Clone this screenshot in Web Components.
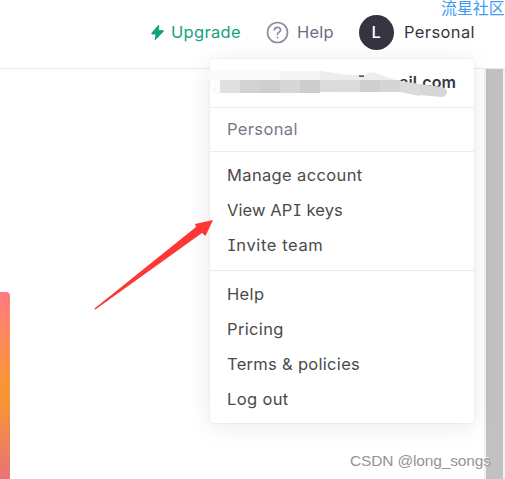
<!DOCTYPE html>
<html lang="en">
<head>
<meta charset="utf-8">
<title>Account menu</title>
<style>
    html, body{
        margin: 0;
        height: 100%;
        overflow: hidden;
        background: #fff;
        font-family: Inter, "Liberation Sans", sans-serif;
    }
</style>
</head>
<body>
<account-page></account-page>
<script>
function attach(el, html){
    var template = document.createElement('template')
    template.innerHTML = html
    el.attachShadow({mode: 'open'}).appendChild(template.content.cloneNode(true))
}

class NavItem extends HTMLElement {
    constructor(){
        super();
        attach(this, `
            <style>
                :host{
                    display: flex;
                    align-items: center;
                    gap: var(--gap, 8px);
                    font-size: 16.5px;
                    line-height: 24px;
                    white-space: nowrap;
                }
                .icon{ display: flex; }
            </style>
            <span class="icon"><slot name="icon"></slot></span>
            <span class="label"><slot></slot></span>
        `)
    }
}
customElements.define('nav-item', NavItem)

class UserAvatar extends HTMLElement {
    constructor(){
        super();
        attach(this, `
            <style>
                :host{
                    display: flex;
                    align-items: center;
                    justify-content: center;
                    width: 35px;
                    height: 35px;
                    border-radius: 50%;
                    background: #343541;
                    color: #fff;
                    font-size: 16.5px;
                    font-weight: 500;
                }
            </style>
            <slot></slot>
        `)
    }
}
customElements.define('user-avatar', UserAvatar)

class TopBar extends HTMLElement {
    constructor(){
        super();
        attach(this, `
            <style>
                :host{
                    display: flex;
                    box-sizing: border-box;
                    height: 69px;
                    padding: 14px 30px 0 151px;
                    border-bottom: 1px solid #e9e9ee;
                }
                nav-item{ height: 36px; }
                svg{ display: block; }
                .upgrade{ width: 115px; color: #10a37f; --gap: 7px; letter-spacing: 0.3px; }
                .help{ width: 93px; color: #6e6e80; --gap: 8px; letter-spacing: 0.2px; }
                .user{ color: #353740; --gap: 10px; letter-spacing: 0.4px; }
            </style>
            <nav-item class="upgrade">
                <svg slot="icon" width="13" height="17" viewBox="0 0 13 17"><path d="M7.8 1 .8 9.100q-.4.9.5.9H5l-.8 5.800 8-8.300q.5-.9-.5-.9H7.500z" fill="#10a37f" stroke="#10a37f" stroke-width=".9" stroke-linejoin="round"/></svg>Upgrade</nav-item>
            <nav-item class="help">
                <svg slot="icon" width="23" height="23" viewBox="0 0 23 23" fill="none" stroke="#8e8ea0" stroke-width="1.7" stroke-linecap="round"><circle cx="11.5" cy="11.5" r="10"/><path d="M8.4 8.8C8.7 5.7 14.6 5.4 14.6 9c0 2.3-3.1 2.3-3.1 4.3"/><path d="M11.5 16.5v.1" stroke-width="2"/></svg>Help</nav-item>
            <nav-item class="user">
                <user-avatar slot="icon">L</user-avatar>Personal</nav-item>
        `)
    }
}
customElements.define('top-bar', TopBar)

class MenuItem extends HTMLElement {
    constructor(){
        super();
        attach(this, `
            <style>
                :host{
                    display: block;
                    height: 35px;
                    line-height: 35px;
                    color: #4a4a4a;
                    font-size: 16.5px;
                    letter-spacing: 0.36px;
                    white-space: nowrap;
                }
            </style>
            <slot></slot>
        `)
    }
}
customElements.define('menu-item', MenuItem)

class MenuGroup extends HTMLElement {
    constructor(){
        super();
        attach(this, `
            <style>
                :host{
                    display: block;
                    box-sizing: border-box;
                    padding: 6px 17px;
                    border-bottom: 1px solid #ececec;
                }
                :host(:last-of-type){ border-bottom: none; }
            </style>
            <slot></slot>
        `)
    }
}
customElements.define('menu-group', MenuGroup)

class AccountMenu extends HTMLElement {
    constructor(){
        super();
        attach(this, `
            <style>
                :host{
                    display: block;
                    box-sizing: border-box;
                    width: 264px;
                    height: 364px;
                    border-radius: 4px;
                    background: #fff;
                    box-shadow: 0 0 2px rgba(0,0,0,.12), 0 3px 26px rgba(0,0,0,.085);
                }
                .email{ height: 49px; padding: 6px 18px; text-align: right; }
                .email menu-item{ font-weight: 600; color: #353740; font-size: 16px; letter-spacing: 0.1px; }
                .team{ height: 44px; padding-top: 4px; }
                .team menu-item{ color: #777786; }
                .account{ height: 119px; }
                /* capital I with serifs */
                i{
                    font: 15.5px/1 "DejaVu Sans Mono", monospace;
                    letter-spacing: 0;
                }
            </style>
            <menu-group class="email"><menu-item>ail.com</menu-item></menu-group>
            <menu-group class="team"><menu-item>Personal</menu-item></menu-group>
            <menu-group class="account">
                <menu-item>Manage account</menu-item>
                <menu-item style="letter-spacing: 0.1px">View AP<i>I</i> keys</menu-item>
                <menu-item style="letter-spacing: 0.6px"><i>I</i>nvite team</menu-item>
            </menu-group>
            <menu-group>
                <menu-item>Help</menu-item>
                <menu-item>Pricing</menu-item>
                <menu-item style="letter-spacing: 0.3px">Terms &amp; policies</menu-item>
                <menu-item>Log out</menu-item>
            </menu-group>
        `)
    }
}
customElements.define('account-menu', AccountMenu)

class AccountPage extends HTMLElement {
    constructor(){
        super();
        attach(this, `
            <style>
                :host{
                    display: flex;
                    flex-direction: column;
                    position: relative;
                    height: 479px;
                    width: 505px;
                    overflow: hidden;
                }
                .body{
                    flex: 1;
                    display: flex;
                    justify-content: space-between;
                }
                .banner{
                    width: 10px;
                    margin-top: 223px;
                    border-radius: 0 4px 0 0;
                    background: linear-gradient(172deg, #ff7b7c 2%, #ff8a5c 25%, #fb9538 48%, #f79433 60%, #f08553 76%, #e97474 100%);
                }
                .scroll{
                    box-sizing: border-box;
                    width: 21px;
                    padding: 0 2px;
                    background: #f1f1f1;
                }
                .thumb{ height: 100%; background: #c1c1c1; }
                account-menu{ position: absolute; left: 210px; top: 59px; }
                .marks{ position: absolute; left: 0; top: 0; }
                .site{
                    position: absolute;
                    left: 441px;
                    top: 0;
                    color: #3d9bf0;
                    font: 400 15.9px/15px "Noto Sans CJK SC", sans-serif;
                    white-space: nowrap;
                }
                .credit{
                    position: absolute;
                    left: 350px;
                    top: 451px;
                    color: #949494;
                    font: 15.5px/20px "Liberation Sans", sans-serif;
                    letter-spacing: -0.15px;
                    text-shadow: -1px -1px 0 #fff;
                    white-space: nowrap;
                }
            </style>
            <top-bar></top-bar>
            <div class="body">
                <div class="banner"></div>
                <div class="scroll"><div class="thumb"></div></div>
            </div>
            <account-menu></account-menu>
            <svg class="marks" width="505" height="479" viewBox="0 0 505 479">
                <!-- smudge over the address -->
                <path d="M210 71h110v10H210q-6-5 0-10z" fill="#fafafa"/>
                <circle cx="217" cy="89" r="5" fill="#fafafa"/>
                <path d="M280 71h40v9h-40z" fill="#f5f5f5"/>
                <path d="M320 71l30 4 15 0q3-4 10-2l21 7 12 5v1h-88z" fill="#ededed"/>
                <path d="M359 75.500h5v1.300h-5z" fill="#333"/>
                <path d="M220 80h20v13h-20z" fill="#dfe1e0"/>
                <path d="M240 80h20v13h-20z" fill="#d2d2d2"/>
                <path d="M260 80h20v13h-20z" fill="#cdcfce"/>
                <path d="M280 80h20v13h-20z" fill="#d7d7d7"/>
                <path d="M300 80h20v13h-20z" fill="#cdcdcd"/>
                <path d="M320 80h20v12h-20z" fill="#dbdbdb"/>
                <path d="M340 80h20v12h-20z" fill="#dadddc"/>
                <path d="M360 80h20v12h-20z" fill="#cfcfcf"/>
                <path d="M380 80h20v12h-20z" fill="#d5d5d5"/>
                <path d="M400 81l20 3v12l-20-4z" fill="#d9dbda"/>
                <path d="M420 84l22 3q5 1 5 5t-5 5l-22-2z" fill="#d6d6d6"/>
                <path d="M94.500 308.500 196 227l-1-3 18-4-7.500 16-3.500-3L95 309.800z" fill="#ff3636"/>
            </svg>
            <div class="site">流星社区</div>
            <div class="credit">CSDN @long_songs</div>
        `)
    }
}
customElements.define('account-page', AccountPage)
</script>
</body>
</html>
